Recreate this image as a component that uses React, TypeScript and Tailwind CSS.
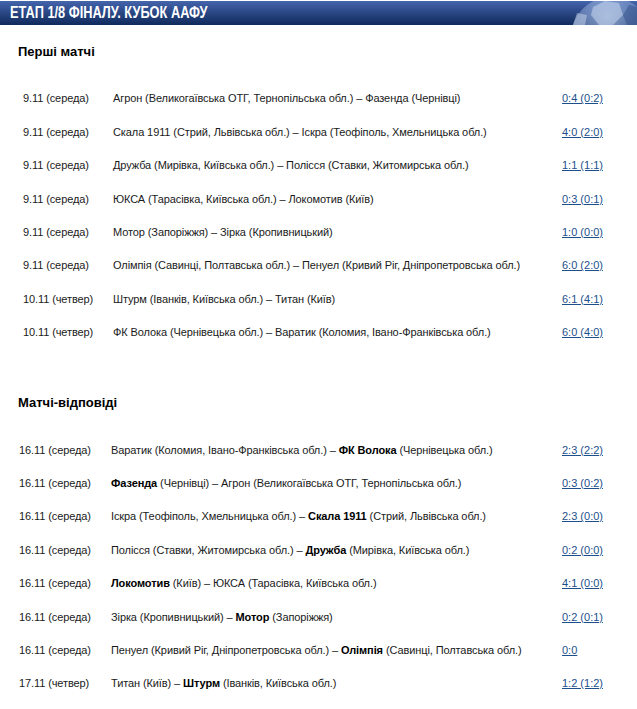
import React from "react";

type Part = { t: string; b?: boolean };
type Match = { date: string; parts: Part[]; score: string };

const first: Match[] = [
  { date: "9.11 (середа)", parts: [{ t: "Агрон (Великогаївська ОТГ, Тернопільська обл.) – Фазенда (Чернівці)" }], score: "0:4 (0:2)" },
  { date: "9.11 (середа)", parts: [{ t: "Скала 1911 (Стрий, Львівська обл.) – Іскра (Теофіполь, Хмельницька обл.)" }], score: "4:0 (2:0)" },
  { date: "9.11 (середа)", parts: [{ t: "Дружба (Мирівка, Київська обл.) – Полісся (Ставки, Житомирська обл.)" }], score: "1:1 (1:1)" },
  { date: "9.11 (середа)", parts: [{ t: "ЮКСА (Тарасівка, Київська обл.) – Локомотив (Київ)" }], score: "0:3 (0:1)" },
  { date: "9.11 (середа)", parts: [{ t: "Мотор (Запоріжжя) – Зірка (Кропивницький)" }], score: "1:0 (0:0)" },
  { date: "9.11 (середа)", parts: [{ t: "Олімпія (Савинці, Полтавська обл.) – Пенуел (Кривий Ріг, Дніпропетровська обл.)" }], score: "6:0 (2:0)" },
  { date: "10.11 (четвер)", parts: [{ t: "Штурм (Іванків, Київська обл.) – Титан (Київ)" }], score: "6:1 (4:1)" },
  { date: "10.11 (четвер)", parts: [{ t: "ФК Волока (Чернівецька обл.) – Варатик (Коломия, Івано-Франківська обл.)" }], score: "6:0 (4:0)" },
];

const second: Match[] = [
  { date: "16.11 (середа)", parts: [{ t: "Варатик (Коломия, Івано-Франківська обл.) – " }, { t: "ФК Волока", b: true }, { t: " (Чернівецька обл.)" }], score: "2:3 (2:2)" },
  { date: "16.11 (середа)", parts: [{ t: "Фазенда", b: true }, { t: " (Чернівці) – Агрон (Великогаївська ОТГ, Тернопільська обл.)" }], score: "0:3 (0:2)" },
  { date: "16.11 (середа)", parts: [{ t: "Іскра (Теофіполь, Хмельницька обл.) – " }, { t: "Скала 1911", b: true }, { t: " (Стрий, Львівська обл.)" }], score: "2:3 (0:0)" },
  { date: "16.11 (середа)", parts: [{ t: "Полісся (Ставки, Житомирська обл.) – " }, { t: "Дружба", b: true }, { t: " (Мирівка, Київська обл.)" }], score: "0:2 (0:0)" },
  { date: "16.11 (середа)", parts: [{ t: "Локомотив", b: true }, { t: " (Київ) – ЮКСА (Тарасівка, Київська обл.)" }], score: "4:1 (0:0)" },
  { date: "16.11 (середа)", parts: [{ t: "Зірка (Кропивницький) – " }, { t: "Мотор", b: true }, { t: " (Запоріжжя)" }], score: "0:2 (0:1)" },
  { date: "16.11 (середа)", parts: [{ t: "Пенуел (Кривий Ріг, Дніпропетровська обл.) – " }, { t: "Олімпія", b: true }, { t: " (Савинці, Полтавська обл.)" }], score: "0:0" },
  { date: "17.11 (четвер)", parts: [{ t: "Титан (Київ) – " }, { t: "Штурм", b: true }, { t: " (Іванків, Київська обл.)" }], score: "1:2 (1:2)" },
];

function Ball() {
  return (
    <svg width="72" height="24" viewBox="0 0 72 24" className="absolute right-0 top-0">
      <defs>
        <radialGradient id="bg1" cx="0.45" cy="0.25" r="0.8">
          <stop offset="0" stopColor="#a9c0e6" stopOpacity="0.75" />
          <stop offset="1" stopColor="#4566a6" stopOpacity="0.45" />
        </radialGradient>
      </defs>
      <circle cx="46" cy="36" r="40" fill="url(#bg1)" />
      <path d="M28 6 L40 0 L54 2 L58 14 L48 24 L34 24 L26 14 Z" fill="#c8d7ef" fillOpacity="0.55" />
      <path d="M8 24 L12 12 L22 14 L20 24 Z" fill="#d8e3f4" fillOpacity="0.45" />
      <path d="M58 14 L64 4 L72 6 L72 24 L62 24 Z" fill="#2c4a86" fillOpacity="0.45" />
    </svg>
  );
}

function Section({ title, rows, datePad, dateW }: { title: string; rows: Match[]; datePad: string; dateW: string }) {
  return (
    <div>
      <div className="pl-[18px] text-[13px] leading-[16px] font-bold text-black">{title}</div>
      <div className="mt-[22px]">
        {rows.map((m, i) => (
          <div key={i} className="flex items-center h-[33.4px] text-[11px] text-[#1a1a1a]">
            <div className={`${datePad} ${dateW} shrink-0 whitespace-nowrap tracking-[-0.1px]`}>{m.date}</div>
            <div className="flex-1 whitespace-nowrap tracking-[-0.1px]">
              {m.parts.map((p, j) => (
                <span key={j} className={p.b ? "font-bold text-black" : ""}>{p.t}</span>
              ))}
            </div>
            <div className="w-[75px] shrink-0 whitespace-nowrap text-[#1d4f8c] underline">{m.score}</div>
          </div>
        ))}
      </div>
    </div>
  );
}

export default function App() {
  return (
    <div className="w-[637px] h-[709px] bg-white overflow-hidden" style={{ fontFamily: '"Liberation Sans", Arial, sans-serif' }}>
      <div className="relative mt-px h-[24px] bg-gradient-to-b from-[#4565ad] to-[#0f2a5c] overflow-hidden flex items-center pl-[10px]">
        <span className="inline-block origin-left scale-x-[0.8] text-white font-bold text-[16px] leading-none whitespace-nowrap">
          ЕТАП 1/8 ФІНАЛУ. КУБОК ААФУ
        </span>
        <Ball />
      </div>
      <div className="pt-[19px]">
        <Section title="Перші матчі" rows={first} datePad="pl-[23px]" dateW="w-[113px]" />
      </div>
      <div className="pt-[46px]">
        <Section title="Матчі-відповіді" rows={second} datePad="pl-[19px]" dateW="w-[111px]" />
      </div>
    </div>
  );
}
